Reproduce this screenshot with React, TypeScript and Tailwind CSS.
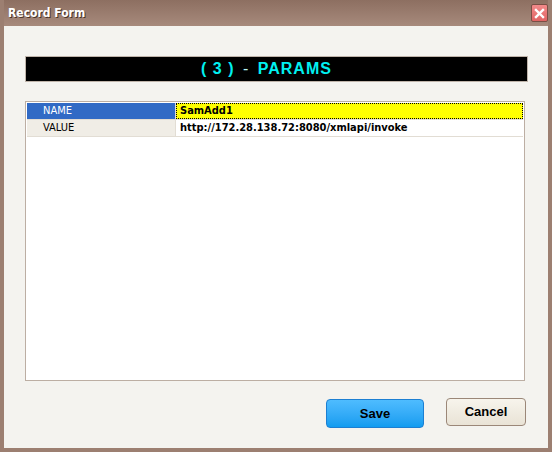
import React from "react";

const rows = [
  { label: "NAME", value: "SamAdd1", selected: true },
  { label: "VALUE", value: "http://172.28.138.72:8080/xmlapi/invoke", selected: false },
];

const App = () => {
  return (
    <div
      className="flex h-[452px] w-[552px] flex-col bg-[#9c7f71] px-[4px] pb-[4px]"
      style={{ fontFamily: "'Liberation Sans', Arial, sans-serif" }}
    >
      <div className="flex h-[26px] items-center justify-between bg-gradient-to-b from-[#8d6f61] to-[#a78a7c] pl-[4px] pr-0">
        <span className="font-['DejaVu_Sans_Condensed',sans-serif] text-[12px] font-bold text-white [text-shadow:1px_1px_0_#4a3328]">
          Record Form
        </span>
        <div className="flex h-[18px] w-[17px] items-center justify-center rounded-[2px] border border-[#7a4f45] bg-gradient-to-b from-[#f28a8a] to-[#e06363]">
          <svg width="11" height="11" viewBox="0 0 11 11">
            <path d="M2 2 L9 9 M9 2 L2 9" stroke="#ffffff" strokeWidth="2.4" strokeLinecap="square" />
          </svg>
        </div>
      </div>
      <div className="flex flex-1 flex-col bg-[#f4f3ef] pl-[21px] pr-[20px] pt-[30px]">
        <div className="flex h-[26px] w-[503px] items-center justify-center border border-[#bfb4aa] bg-black">
          <span className="mr-[20px] text-[16px] font-bold tracking-[1px] text-[#00f0f0]">
            ( 3 ) <span className="mx-[3px] font-normal text-[#b8f4f4]">-</span> PARAMS
          </span>
        </div>
        <div className="mt-[19px] h-[280px] w-[500px] border border-[#bcaea3] bg-white p-[1px] font-['DejaVu_Sans_Condensed',sans-serif]">
          {rows.map((r) => (
            <div key={r.label} className="flex h-[17px] border-b border-[#e2ddd4]">
              <div
                className={
                  r.selected
                    ? "flex w-[149px] items-center border-r border-[#e2ddd4] bg-[#316ac5] pl-[16px] text-[11px] text-white"
                    : "flex w-[149px] items-center border-r border-[#e2ddd4] bg-[#f0ede6] pl-[16px] text-[11px] text-black"
                }
              >
                {r.label}
              </div>
              <div
                className={
                  r.selected
                    ? "flex flex-1 items-center border border-dotted border-black bg-[#ffff00] pl-[3px] text-[11px] font-bold text-black"
                    : "flex flex-1 items-center pl-[4px] text-[11px] font-bold text-black"
                }
              >
                {r.value}
              </div>
            </div>
          ))}
        </div>
        <div className="mt-[18px] flex justify-end gap-[22px] pr-[2px]">
          <button className="h-[29px] w-[98px] rounded-[4px] border border-[#1c7fd2] bg-gradient-to-b from-[#4ebcff] to-[#109cf0] text-[13px] font-bold text-black">
            Save
          </button>
          <button className="mt-[-1px] h-[28px] w-[80px] rounded-[4px] border border-[#9b8778] bg-gradient-to-b from-[#f7f4ec] to-[#e9e3d6] text-[13px] font-bold text-black">
            Cancel
          </button>
        </div>
      </div>
    </div>
  );
};

export default App;
